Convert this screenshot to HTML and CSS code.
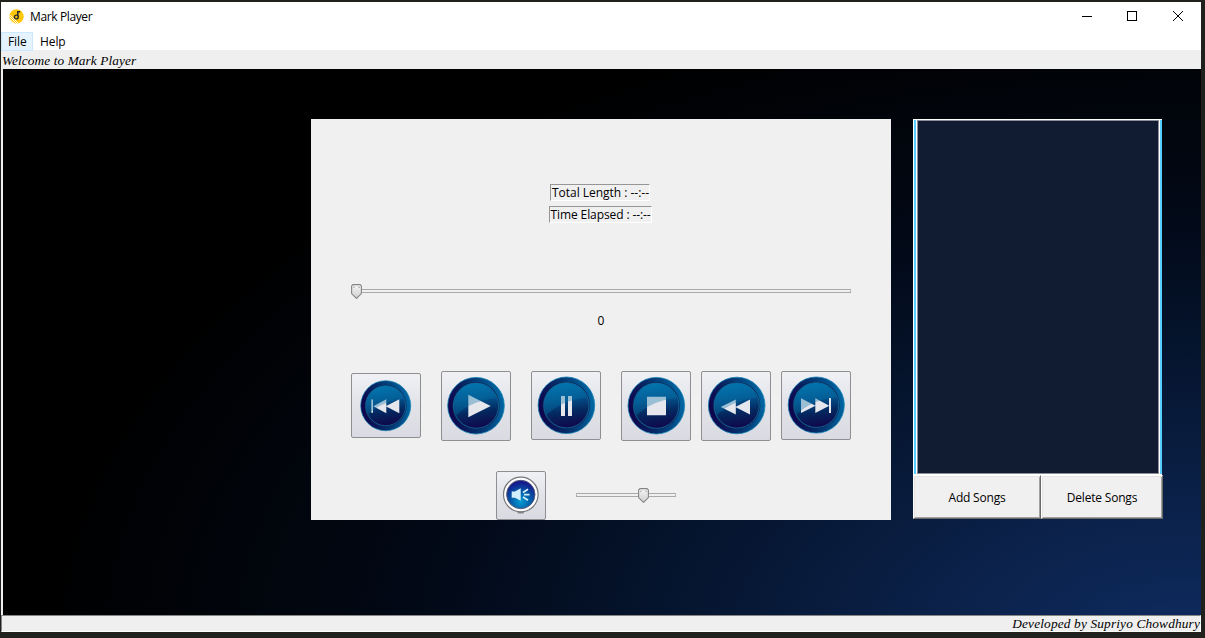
FILE: index.html
```html
<!DOCTYPE html>
<html lang="en">
<head>
<meta charset="utf-8">
<title>Mark Player</title>
<link rel="stylesheet" href="styles.css">
</head>
<body>
<svg class="defs" width="0" height="0" aria-hidden="true">
  <defs>
    <linearGradient id="rim" x1="0" y1=".6" x2="1" y2=".4">
      <stop offset="0" stop-color="#10004a"/><stop offset=".45" stop-color="#04306b"/><stop offset="1" stop-color="#0068a4"/>
    </linearGradient>
    <linearGradient id="face" x1=".4" y1="0" x2=".55" y2="1">
      <stop offset="0" stop-color="#0079b5"/><stop offset=".35" stop-color="#035590"/><stop offset=".65" stop-color="#04285f"/><stop offset="1" stop-color="#10064c"/>
    </linearGradient>
    <radialGradient id="speaker" cx=".5" cy=".75" r=".7">
      <stop offset="0" stop-color="#009bd0"/><stop offset=".55" stop-color="#0756a5"/><stop offset="1" stop-color="#15158c"/>
    </radialGradient>
    <linearGradient id="thumb" x1="0" y1="0" x2="0" y2="1">
      <stop offset="0" stop-color="#f5f5f5"/><stop offset="1" stop-color="#cfcfcf"/>
    </linearGradient>
    <clipPath id="above"><path d="M-30-30H30V-8Q-4-8-22 12H-30Z"/></clipPath>
    <symbol id="disc" viewBox="-30 -30 60 60" overflow="visible">
      <circle r="28.3" fill="url(#rim)" stroke="#1681b4" stroke-width=".8"/>
      <circle r="23.6" fill="#092452"/>
      <circle r="22.6" fill="url(#face)" stroke="#176da1" stroke-width=".8"/>
      <circle r="21.8" fill="#0b80b5" opacity=".08" clip-path="url(#above)"/>
    </symbol>
    <symbol id="shade" viewBox="-30 -30 60 60" overflow="visible">
      <circle r="21.8" fill="#0870a4" opacity=".34" clip-path="url(#above)"/>
    </symbol>
    <symbol id="knob" viewBox="0 0 11 15">
      <path d="M2 .6H9L10.4 2V9.6L5.5 14.4.6 9.6V2Z" fill="url(#thumb)" stroke="#858585" stroke-width="1.1"/>
      <path d="M2.5 4V3H4M7 3H8.5V4" fill="none" stroke="#aaa" stroke-width=".8"/>
    </symbol>
  </defs>
</svg>
<div class="window">
  <header class="titlebar">
    <svg class="logo" width="15" height="15" viewBox="0 0 15 15">
      <circle cx="7.5" cy="7.5" r="7.2" fill="#ffc60a"/>
      <path d="M0 7L8 15M0 9.5L5.5 15M1 5.8L9.5 14.5" stroke="#fff" stroke-width=".9"/>
      <path d="M8.8 2V9M8.8 2.7H11.2" stroke="#262b32" stroke-width="1.5" fill="none"/>
      <circle cx="7.3" cy="8" r="1.9" fill="#ffc60a" stroke="#262b32" stroke-width="1.4"/>
    </svg>
    <span class="title">Mark Player</span>
    <svg class="controls" width="104" height="12" viewBox="0 0 104 12" fill="none" stroke="#000">
      <path d="M0 6.5H10M45.5 1.5H54.5V10.5H45.5Z" shape-rendering="crispEdges"/>
      <path d="M91 1L101 11M101 1L91 11"/>
    </svg>
  </header>
  <nav class="menu"><span class="item active">File</span><span class="item">Help</span></nav>
  <div class="welcome"><span class="welcome-text">Welcome to Mark Player</span></div>
  <main class="stage">
    <section class="player">
      <div class="times">
        <span class="time total">Total Length : --:--</span>
        <span class="time elapsed">Time Elapsed : --:--</span>
      </div>
      <div class="seek"><svg class="knob" width="11" height="15"><use href="#knob"/></svg></div>
      <div class="position">0</div>
      <div class="transport">
        <button class="key previous"><svg width="70" height="65" viewBox="0 0 70 65">
          <use href="#disc" x="8.2" y="6.2" width="53" height="53"/>
          <path d="M20.3 26.5H22V39.7H20.3ZM22.3 33.3L35.3 26.3V40.3ZM34.7 33.3L48.3 26.3V40.3Z" fill="#e6e7ed"/>
          <use href="#shade" x="8.2" y="6.2" width="53" height="53"/></svg></button>
        <button class="key play"><svg width="70" height="70" viewBox="0 0 70 70">
          <use href="#disc" x="5" y="4.7" width="60" height="60"/>
          <path d="M27.3 23.7L49.7 35L27.3 46.3Z" fill="#e6e7ed"/>
          <use href="#shade" x="5" y="4.7" width="60" height="60"/></svg></button>
        <button class="key pause"><svg width="70" height="69" viewBox="0 0 70 69">
          <use href="#disc" x="5.4" y="4.3" width="60" height="60"/>
          <path d="M30 25H34V45H30ZM37 25H41V45H37Z" fill="#e6e7ed"/>
          <use href="#shade" x="5.4" y="4.3" width="60" height="60"/></svg></button>
        <button class="key stop"><svg width="70" height="70" viewBox="0 0 70 70">
          <use href="#disc" x="5.3" y="4.7" width="60" height="60"/>
          <path d="M26 25.7H45V44.3H26Z" fill="#e6e7ed"/>
          <use href="#shade" x="5.3" y="4.7" width="60" height="60"/></svg></button>
        <button class="key rewind"><svg width="70" height="70" viewBox="0 0 70 70">
          <use href="#disc" x="5.7" y="4.5" width="60" height="60"/>
          <path d="M19.7 36L34.8 28.6V43.4ZM34.3 36L49 28.6V43.4Z" fill="#e6e7ed"/>
          <use href="#shade" x="5.7" y="4.5" width="60" height="60"/></svg></button>
        <button class="key next"><svg width="70" height="69" viewBox="0 0 70 69">
          <use href="#disc" x="5.5" y="4.3" width="59.5" height="59.5"/>
          <path d="M20 27.3L34.5 34.7L20 42ZM34.3 27.3L48.3 34.7L34.3 42ZM48 27H50V42H48Z" fill="#e6e7ed"/>
          <use href="#shade" x="5.5" y="4.3" width="59.5" height="59.5"/></svg></button>
      </div>
      <div class="volume">
        <button class="key mute"><svg width="50" height="49" viewBox="0 0 50 49">
          <path d="M20 38H29L27.5 42.5H22Z" fill="#888"/>
          <circle cx="24.8" cy="23.5" r="17.3" fill="#fff" stroke="#77777b" stroke-width="1.2"/>
          <circle cx="24.8" cy="23.5" r="14.2" fill="url(#speaker)" stroke="#555a78" stroke-width="1"/>
          <path d="M15.7 20.5H19L24.7 17.3V29.7L19 26.8H15.7Z" fill="#d4effc"/>
          <path d="M27 21.5L32 18.2M28 23.7H33.5M27 26L32 29.2" stroke="#d4effc" stroke-width="1.7"/></svg></button>
        <div class="level"><svg class="knob" width="11" height="15"><use href="#knob"/></svg></div>
      </div>
    </section>
    <aside class="playlist">
      <div class="frame"><div class="list"></div></div>
      <div class="actions"><button class="action add"><span class="add-text">Add Songs</span></button><button class="action delete"><span class="delete-text">Delete Songs</span></button></div>
    </aside>
  </main>
  <footer class="status"><span class="status-text">Developed by Supriyo Chowdhury</span></footer>
</div>
</body>
</html>
```
FILE: styles.css
```css
* { box-sizing: border-box; }
html, body { margin: 0; height: 638px; overflow: hidden; }
body { padding: 2px 4px 6px 1px; background: #20211d; font: 12px/16px "Open Sans", "Noto Sans", sans-serif; color: #000; }
.defs { position: absolute; }
svg { display: block; flex: none; }
button { font: inherit; color: inherit; margin: 0; padding: 0; }
.window { width: 1200px; height: 630px; display: flex; flex-direction: column; background: #efefef; }
.titlebar { height: 30px; display: flex; align-items: center; padding: 0 15px 2px 8px; background: #fff; }
.title { margin-left: 6px; padding-top: 2px; letter-spacing: -.38px; white-space: nowrap; }
.controls { margin-left: auto; }
.menu { height: 18px; display: flex; background: #fff; }
.item { height: 19px; padding: 2px 7px 0; white-space: nowrap; letter-spacing: -.1px; }
.active { width: 32px; padding: 1px 0 0 6px; background: #e5f3ff; border: 1px solid #cce8ff; }
.welcome, .status { font: italic 13.33px/17px "Liberation Serif", serif; white-space: nowrap; }
.welcome { height: 19px; padding: 2px 1px 0; letter-spacing: .09px; }
.stage { height: 546px; margin-left: 2px; display: flex; align-items: flex-start; padding: 50px 38px 0 308px; justify-content: space-between;
  background: radial-gradient(ellipse 1150px 660px at 1180px 580px, #0e2b60 0%, #0b2149 22%, #05142d 46%, #020917 66%, #01040a 84%, #000 100%); }
.player { width: 580px; height: 401px; background: #f0f0f0; }
.times { display: flex; flex-direction: column; align-items: center; gap: 5px; padding-top: 65px; }
.time { height: 17px; line-height: 16px; border: 1px solid; border-color: #969696 #fff #fff #969696; white-space: nowrap; }
.total { width: 100px; margin-right: 2px; padding-left: 1px; letter-spacing: -.02px; }
.elapsed { width: 103px; margin-right: 2px; padding-left: 1px; letter-spacing: -.1px; }
.seek { width: 500px; height: 15px; margin: 61px 40px 0; }
.seek, .level { display: flex; align-items: center; background: linear-gradient(#a9a9a9, #a9a9a9) 0 5px / 100% 1px no-repeat, linear-gradient(#a9a9a9, #a9a9a9) 0 8px / 100% 1px no-repeat; border-radius: 2px; }
.seek::after, .level::after { content: ""; margin-left: auto; width: 1px; height: 2px; background: #a9a9a9; transform: translateY(-.5px); }
.level::before { content: ""; width: 1px; height: 2px; background: #a9a9a9; transform: translateY(-.5px); }
.position { text-align: center; height: 16px; margin-top: 14px; }
.transport { display: flex; margin: 42px 0 0 40px; height: 70px; align-items: flex-start; }
.key { display: block; border: 1px solid #8f8f91; border-radius: 2px; background: linear-gradient(#f0f1f5 0%, #e3e4e9 45%, #dadbe2 100%); overflow: hidden; height: 70px; width: 70px; flex: none; }
.key svg { margin: -1px; }
.play, .pause, .stop { margin-left: 20px; }
.rewind, .next { margin-left: 10px; }
.previous { height: 65px; margin-top: 2px; }
.pause, .next { height: 69px; }
.volume { display: flex; margin: 30px 0 0 185px; }
.mute { width: 50px; height: 49px; }
.level { width: 100px; height: 15px; margin: 17px 0 0 30px; }
.level .knob { margin-left: 61px; }
.playlist { width: 250px; }
.frame { width: 249px; height: 356px; display: flex; border: 1px solid #fff; border-width: 1px 0 1px 1px; background: #56ceff; padding: 0 2px; }
.list { flex: 1; background: #111c33; border: 1px solid #8c8e98; box-shadow: -1px 0 #fff, 1px 0 #fff; margin: 0 1px; }
.actions { display: flex; height: 44px; }
.action { display: block; text-align: center; padding-top: 1px; letter-spacing: -.2px; background: #f0f0f0; border: 1px solid; border-color: #fff #696969 #696969 #fff; box-shadow: inset 1px 1px #e3e3e3, inset -1px -1px #a0a0a0; white-space: nowrap; }
.add { width: 128px; }
.delete { width: 122px; }
.status { height: 17px; border: 1px solid; border-color: #858585 #fff #fff #858585; text-align: right; line-height: 16px; letter-spacing: .15px; }
```
